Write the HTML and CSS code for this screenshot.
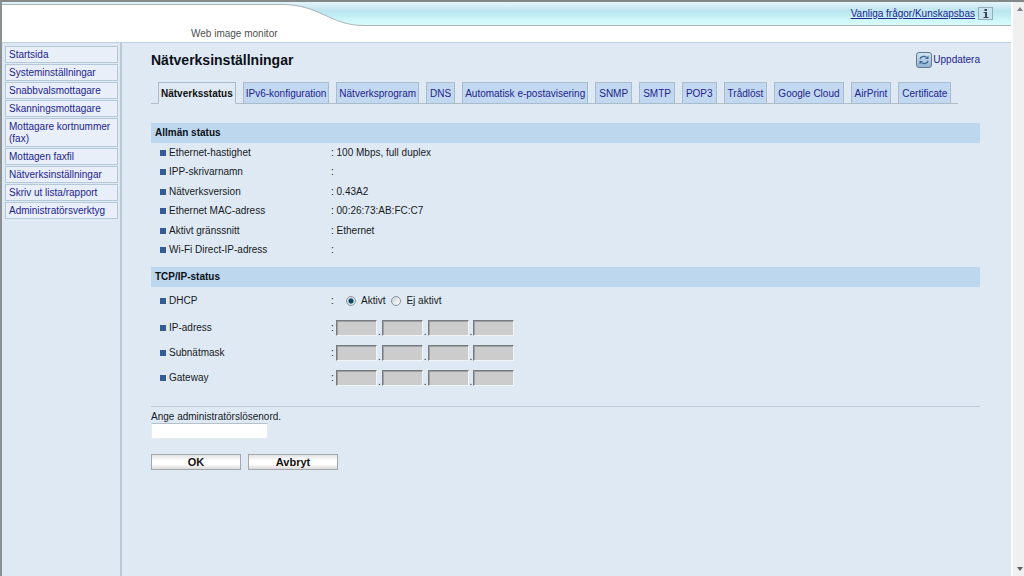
FILE: index.html
```html
<!DOCTYPE html>
<html lang="sv">
<head>
<meta charset="utf-8">
<title>Web image monitor</title>
<link rel="stylesheet" href="styles.css">
</head>
<body>
<div class="frame">
  <div class="page">
    <header class="header">
      <div class="banner">
        <svg class="wave" width="380" height="25" viewBox="0 0 380 25" aria-hidden="true">
          <path d="M0 2.5H280C318 2.5 328 23.5 362 23.5H380V25H0Z" fill="#fff"/>
          <path d="M0 2.5H280C318 2.5 328 23.5 362 23.5H380" fill="none" stroke="#acb2b6"/>
        </svg>
        <div class="banner-links">
          <a class="faq" href="#faq">Vanliga frågor/Kunskapsbas</a>
          <button class="info" type="button" aria-label="Information">
            <svg width="8" height="9" viewBox="0 0 8 9"><path d="M2.500 0H5V2H2.500ZM1.500 3H5V8H6.500V9H1.500V8H3V4H1.500Z" fill="#35465c"/></svg>
          </button>
        </div>
      </div>
      <div class="brand">Web image monitor</div>
    </header>
    <div class="columns">
      <nav class="nav">
        <a href="#start">Startsida</a>
        <a href="#system">Systeminställningar</a>
        <a href="#quick">Snabbvalsmottagare</a>
        <a href="#scan">Skanningsmottagare</a>
        <a href="#fax">Mottagare kortnummer (fax)</a>
        <a href="#received">Mottagen faxfil</a>
        <a href="#network">Nätverksinställningar</a>
        <a href="#print">Skriv ut lista/rapport</a>
        <a href="#admin">Administratörsverktyg</a>
      </nav>
      <main class="main">
        <div class="title-row">
          <h1>Nätverksinställningar</h1>
          <a class="refresh" href="#refresh">
            <svg width="16" height="16" viewBox="0 0 16 16" aria-hidden="true">
              <defs><linearGradient id="key" x2="0" y2="1"><stop stop-color="#d3e6f5"/><stop offset="1" stop-color="#8fb2d2"/></linearGradient></defs>
              <rect x=".5" y=".5" width="15" height="15" rx="2.500" fill="url(#key)" stroke="#64798e"/>
              <path d="M4 7C4.500 4.500 8 3.800 10.500 5.200M12 9C11.500 11.500 8 12.200 5.500 10.800" fill="none" stroke="#41678f" stroke-width="1.300"/>
              <path d="M12.500 3.500V7H9ZM3.500 12.500V9H7Z" fill="#41678f"/>
            </svg>
            <span>Uppdatera</span>
          </a>
        </div>
        <div class="tabs">
          <a class="tab active" href="#t1" aria-current="page">Nätverksstatus</a>
          <a class="tab long" href="#t2">IPv6-konfiguration</a>
          <a class="tab long" href="#t3">Nätverksprogram</a>
          <a class="tab" href="#t4">DNS</a>
          <a class="tab long" href="#t5">Automatisk e-postavisering</a>
          <a class="tab" href="#t6">SNMP</a>
          <a class="tab" href="#t7">SMTP</a>
          <a class="tab" href="#t8">POP3</a>
          <a class="tab" href="#t9">Trådlöst</a>
          <a class="tab" href="#t10">Google Cloud</a>
          <a class="tab" href="#t11">AirPrint</a>
          <a class="tab" href="#t12">Certificate</a>
        </div>
        <form>
          <h2>Allmän status</h2>
          <table class="status">
            <tr><th scope="row"><span class="name">Ethernet-hastighet</span></th><td>: 100 Mbps, full duplex</td></tr>
            <tr><th scope="row"><span class="name">IPP-skrivarnamn</span></th><td>:</td></tr>
            <tr><th scope="row"><span class="name">Nätverksversion</span></th><td>: 0.43A2</td></tr>
            <tr><th scope="row"><span class="name">Ethernet MAC-adress</span></th><td>: 00:26:73:AB:FC:C7</td></tr>
            <tr><th scope="row"><span class="name">Aktivt gränssnitt</span></th><td>: Ethernet</td></tr>
            <tr><th scope="row"><span class="name">Wi-Fi Direct-IP-adress</span></th><td>:</td></tr>
          </table>
          <h2>TCP/IP-status</h2>
          <div class="row dhcp" role="radiogroup" aria-labelledby="dhcp">
            <span class="name" id="dhcp">DHCP</span><span class="colon">:</span>
            <div class="choices">
              <label><input type="radio" name="dhcp" checked>Aktivt</label>
              <label><input type="radio" name="dhcp">Ej aktivt</label>
            </div>
          </div>
          <div class="row" role="group" aria-labelledby="ip">
            <span class="name" id="ip">IP-adress</span><span class="colon">:</span>
            <div class="octets"><input disabled aria-label="IP-adress 1">.<input disabled aria-label="IP-adress 2">.<input disabled aria-label="IP-adress 3">.<input disabled aria-label="IP-adress 4"></div>
          </div>
          <div class="row" role="group" aria-labelledby="mask">
            <span class="name" id="mask">Subnätmask</span><span class="colon">:</span>
            <div class="octets"><input disabled aria-label="Subnätmask 1">.<input disabled aria-label="Subnätmask 2">.<input disabled aria-label="Subnätmask 3">.<input disabled aria-label="Subnätmask 4"></div>
          </div>
          <div class="row" role="group" aria-labelledby="gateway">
            <span class="name" id="gateway">Gateway</span><span class="colon">:</span>
            <div class="octets"><input disabled aria-label="Gateway 1">.<input disabled aria-label="Gateway 2">.<input disabled aria-label="Gateway 3">.<input disabled aria-label="Gateway 4"></div>
          </div>
          <div class="confirm">
            <label for="password">Ange administratörslösenord.</label>
            <input id="password" class="password" type="password">
            <div class="actions">
              <button type="submit">OK</button>
              <button type="reset">Avbryt</button>
            </div>
          </div>
        </form>
      </main>
    </div>
  </div>
  <div class="scrollbar" aria-hidden="true">
    <svg width="6" height="4" viewBox="0 0 6 4"><path d="M0 4L3 0L6 4Z" fill="#808080"/></svg>
    <svg width="6" height="4" viewBox="0 0 6 4"><path d="M0 0L3 4L6 0Z" fill="#606060"/></svg>
  </div>
</div>
</body>
</html>
```

FILE: styles.css
```css
* { box-sizing: border-box; }
body {
  margin: 0;
  font: 10px/12px "Liberation Sans", Arial, sans-serif;
  color: #151a22;
}
a { color: #23238e; text-decoration: none; }
h1, h2 { margin: 0; color: #0c1016; }
input { margin: 0; font: inherit; }

.frame {
  display: flex;
  min-height: 100vh;
  border-top: 2px solid #838889;
  border-left: 2px solid #8b9093;
}
.page { flex: 1; display: flex; flex-direction: column; background: #dfe9f4; }
.scrollbar {
  width: 13px;
  padding: 5px 3px 5px 4px;
  display: flex;
  flex-direction: column;
  justify-content: space-between;
  background: #f0f0f0;
  border-left: 2px solid #fafcfd;
}

.header { background: #fff; border-bottom: 1px solid #bfd0df; }
.banner {
  display: flex;
  height: 25px;
  border-bottom: 1px solid #fff;
  background: linear-gradient(#e4f4fa 0, #cfebf3 5px, #bce5ef 9px, #bfedf3 13px, #d0f8fa 19px, #defbfc 100%);
}
.wave { display: block; flex: none; }
.banner-links {
  flex: 1;
  display: flex;
  justify-content: flex-end;
  align-items: center;
  gap: 3px;
  height: 24px;
  padding-right: 18px;
  border-bottom: 1px solid #acb2b6;
}
.faq { text-decoration: underline; }
.info {
  display: grid;
  place-items: center;
  width: 15px;
  height: 13px;
  padding: 0;
  background: #c8e4ee;
  border: 1px solid #93adba;
}
.brand { height: 15px; padding-left: 189px; line-height: 14px; color: #505050; }

.columns { flex: 1; display: flex; }
.nav {
  width: 120px;
  padding: 3px 2px 3px 3px;
  display: flex;
  flex-direction: column;
  gap: 1px;
  border-right: 2px solid #bdcad6;
}
.nav a {
  padding: 2px 3px 1px;
  background: #e8eff8;
  border: 1px solid #b5c8d8;
}

.main { flex: 1; padding: 8px 31px 20px 29px; }
.title-row { display: flex; justify-content: space-between; align-items: center; height: 18px; }
h1 { font-size: 14px; line-height: 18px; }
.refresh { display: flex; align-items: center; gap: 1px; }

.tabs {
  display: flex;
  gap: 7px;
  width: fit-content;
  margin: 13px 0 19px;
  padding: 0 7px;
  border-bottom: 1px solid #b0bcc6;
}
.tab {
  margin-bottom: -1px;
  padding: 5px 3px 3px;
  background: #c1d8f0;
  border: 1px solid #a9bccb;
  white-space: nowrap;
}
.tab.long, .tab.active { padding: 5px 2px 3px; }
.tab.active {
  color: #101010;
  font-weight: bold;
  background: #dfe9f4;
  border-bottom-color: #dfe9f4;
}

h2 {
  padding: 0 4px;
  font-size: 10px;
  line-height: 20px;
  background: #bcd7ee;
}
.status { width: 100%; height: 124px; padding-bottom: 7px; border-spacing: 0; }
.status th, .status td { padding: 0; text-align: left; font-weight: normal; }
.status th { width: 180px; }
.name { display: flex; align-items: center; gap: 3px; width: 180px; padding-left: 9px; }
.name::before { content: ""; width: 6px; height: 6px; background: #345b92; }
.row { display: flex; align-items: center; height: 25px; }
.row.dhcp { height: 28px; }
.colon { width: 5px; }
.choices { display: flex; gap: 6px; padding-left: 10px; }
.choices label { display: flex; align-items: center; gap: 5px; }
.choices input {
  appearance: none;
  width: 10px;
  height: 10px;
  border: 1px solid #8a9299;
  border-radius: 50%;
  background: linear-gradient(135deg, #ccd1d5, #fff);
}
.choices input:checked { background: radial-gradient(circle, #12445f 0 2px, #b9d3df 3px, #eef4f8 4px); }
.octets { display: flex; align-items: flex-end; gap: 1px; line-height: 8px; }
.octets input {
  width: 41px;
  height: 16px;
  padding: 1px;
  background: #cccccc;
  border: 1px solid;
  border-color: #777b7f #f1f5f8 #f1f5f8 #777b7f;
  box-shadow: inset 1px 1px #9da0a2;
}
.confirm { margin-top: 16px; padding-top: 4px; border-top: 1px solid #bdcbd7; }
.confirm label { display: block; }
.password {
  display: block;
  width: 117px;
  height: 16px;
  padding: 1px 2px;
  border: 1px solid #e5ebf1;
  border-top-color: #b6c0ca;
  background: #fff;
}
.actions { display: flex; gap: 7px; margin-top: 15px; }
.actions button {
  width: 90px;
  height: 16px;
  padding: 0;
  font: bold 11px/12px "Liberation Sans", Arial, sans-serif;
  color: #101010;
  background: linear-gradient(#e3e3e3, #fff 40%, #fff 65%, #dadada);
  border: 1px solid #a4a8ac;
}
```
